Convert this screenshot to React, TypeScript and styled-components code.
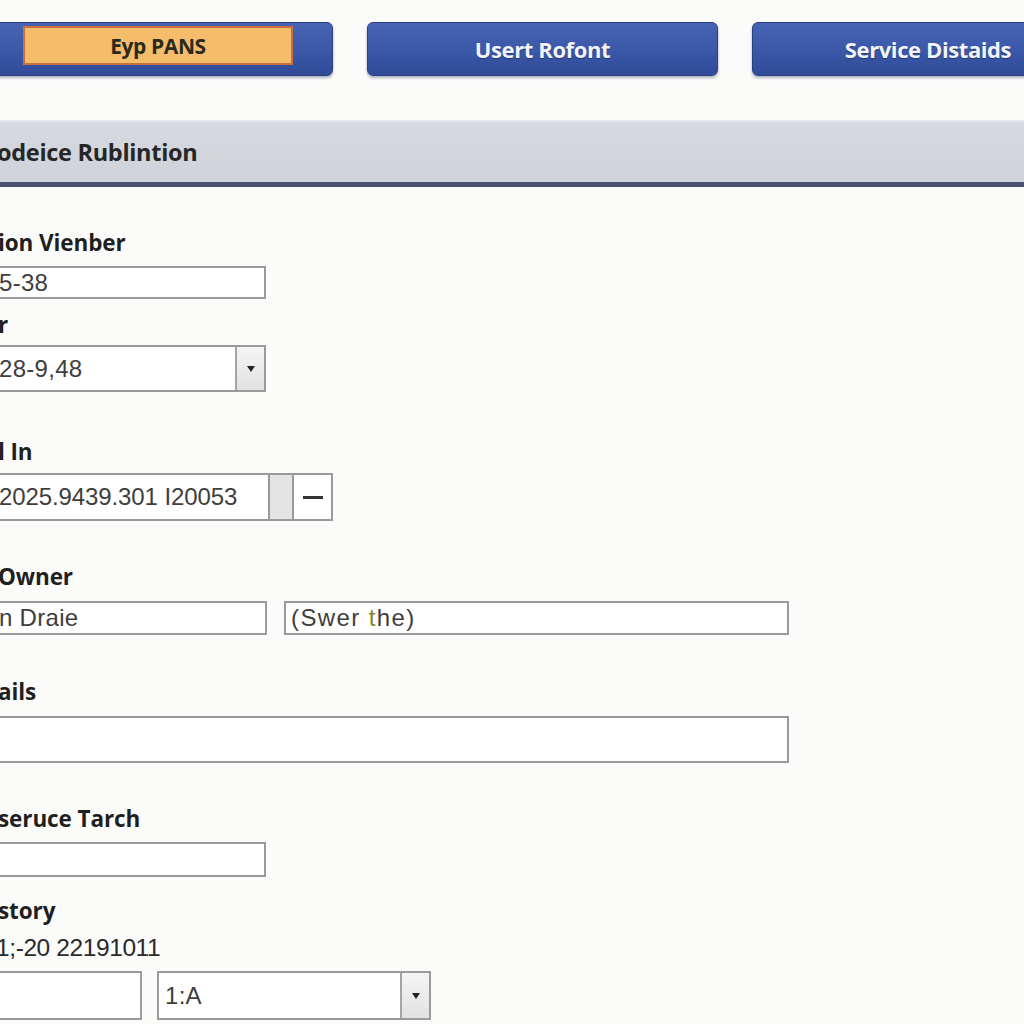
import React, { FC } from 'react'
import styled, { createGlobalStyle } from 'styled-components'

const GlobalStyle = createGlobalStyle`
  html, body {
    margin: 0;
    padding: 0;
    background: #fbfbfa;
    overflow: hidden;
  }
  body {
    width: 1024px;
    height: 1024px;
  }
`

export default function App() {
  return (
    <>
      <GlobalStyle />
      <Page>
        <Toolbar>
          <TabButton $width={353} $offset={-20}>
            <ActiveTab>Eyp PANS</ActiveTab>
          </TabButton>
          <TabButton $width={351}>Usert Rofont</TabButton>
          <TabButton $width={352}>Service Distaids</TabButton>
        </Toolbar>

        <SectionBar>
          <SectionTitle>odeice Rublintion</SectionTitle>
        </SectionBar>

        <Form>
          <Label $mt={44}>ion Vienber</Label>
          <TextBox $mt={11} $width={278} $height={33}>5-38</TextBox>

          <Label $mt={14}>r</Label>
          <SelectBox $mt={8} $width={278} $height={47} value="28-9,48" />

          <Label $mt={48}>l In</Label>
          <DateRow>
            <DateText>2025.9439.301 I20053</DateText>
            <Spinner />
            <DashButton>
              <Dash />
            </DashButton>
          </DateRow>

          <Label $mt={44}>Owner</Label>
          <Row $mt={12} $gap={17}>
            <TextBox $width={279} $height={34}>n Draie</TextBox>
            <TextBox $width={505} $height={34} $pad={5}>
              <Wide>
                (Swer <Odd>t</Odd>he)
              </Wide>
            </TextBox>
          </Row>

          <Label $mt={45}>ails</Label>
          <TextBox $mt={12} $width={801} $height={47} />

          <Label $mt={44}>seruce Tarch</Label>
          <TextBox $mt={11} $width={278} $height={35} />

          <Label $mt={22}>story</Label>
          <Plain>1;-20 22191011</Plain>
          <Row $mt={11} $gap={15}>
            <TextBox $width={154} $height={49} />
            <SelectBox $width={274} $height={49} value="1:A" $pad={6} />
          </Row>
        </Form>
      </Page>
    </>
  )
}

const SelectBox: FC<{
  value: string
  $width: number
  $height: number
  $mt?: number
  $pad?: number
}> = ({ value, $width, $height, $mt, $pad }) => (
  <TextBox $width={$width} $height={$height} $mt={$mt} $pad={$pad}>
    <Grow>{value}</Grow>
    <DropButton>
      <Arrow />
    </DropButton>
  </TextBox>
)

const Page = styled.div`
  width: 1024px;
  height: 1024px;
  display: flex;
  flex-direction: column;
  font-family: 'Open Sans', 'Liberation Sans', sans-serif;
  color: #222;
`

const Toolbar = styled.div`
  display: flex;
  gap: 34px;
  padding-top: 22px;
  height: 54px;
`

const TabButton = styled.div<{ $width: number; $offset?: number }>`
  flex: none;
  width: ${p => p.$width}px;
  margin-left: ${p => p.$offset ?? 0}px;
  height: 54px;
  box-sizing: border-box;
  border-radius: 6px;
  border: 1px solid #2a3f80;
  background: linear-gradient(#4663b4 0%, #3a57a8 55%, #2f4b98 100%);
  box-shadow: 0 2px 3px rgba(30, 40, 80, 0.35);
  display: flex;
  align-items: center;
  justify-content: center;
  color: #f2f4fa;
  font-weight: 700;
  font-size: 22px;
  letter-spacing: -0.4px;
  text-shadow: 0 1px 1px rgba(0, 0, 0, 0.35);
`

const ActiveTab = styled.div`
  align-self: flex-start;
  margin: 3px auto 0 42px;
  width: 270px;
  height: 39px;
  box-sizing: border-box;
  background: #f5bc6c;
  border: 2px solid #c7713f;
  display: flex;
  align-items: center;
  justify-content: center;
  color: #2a2a1c;
  font-size: 21px;
  text-shadow: none;
`

const SectionBar = styled.div`
  margin-top: 44px;
  height: 67px;
  box-sizing: border-box;
  background: linear-gradient(#d6d9de, #cfd2d9);
  border-top: 2px solid #e6e7ea;
  border-bottom: 5px solid #4a5171;
  display: flex;
  align-items: center;
`

const SectionTitle = styled.div`
  margin-left: -3px;
  font-weight: 700;
  font-size: 23.5px;
  letter-spacing: -0.3px;
  color: #262626;
`

const Form = styled.div`
  display: flex;
  flex-direction: column;
  align-items: flex-start;
`

const Label = styled.div<{ $mt: number }>`
  margin-top: ${p => p.$mt}px;
  height: 24px;
  line-height: 24px;
  margin-left: -2px;
  font-weight: 700;
  font-size: 22.5px;
  letter-spacing: -0.1px;
  color: #1f1f1f;
  white-space: nowrap;
`

const TextBox = styled.div<{ $width: number; $height: number; $mt?: number; $pad?: number }>`
  margin-top: ${p => p.$mt ?? 0}px;
  width: ${p => p.$width}px;
  height: ${p => p.$height}px;
  margin-left: ${p => (p.$pad ? 0 : -12)}px;
  padding-left: ${p => p.$pad ?? 9}px;
  box-sizing: border-box;
  border: 2px solid #9a9a9a;
  background: #fff;
  display: flex;
  align-items: center;
  font-family: 'Liberation Sans', Arial, sans-serif;
  font-size: 24px;
  letter-spacing: 0.3px;
  color: #3e3e3e;
  white-space: nowrap;
`

const Wide = styled.span`
  letter-spacing: 1.4px;
`

const Row = styled.div<{ $mt: number; $gap: number }>`
  margin-top: ${p => p.$mt}px;
  display: flex;
  gap: ${p => p.$gap}px;
  & > :not(:first-child) {
    margin-left: 0;
  }
`

const Grow = styled.span`
  flex: 1;
`

const DropButton = styled.div`
  align-self: stretch;
  width: 27px;
  border-left: 2px solid #a5a5a5;
  background: linear-gradient(#f4f4f4, #e2e2e2);
  display: flex;
  align-items: center;
  justify-content: center;
`

const Arrow = styled.div`
  width: 0;
  height: 0;
  border-left: 4px solid transparent;
  border-right: 4px solid transparent;
  border-top: 6px solid #222;
`

const DateRow = styled.div`
  margin-top: 9px;
  margin-left: -12px;
  width: 345px;
  height: 48px;
  box-sizing: border-box;
  border: 2px solid #9a9a9a;
  background: #fff;
  display: flex;
  align-items: stretch;
`

const DateText = styled.div`
  width: 278px;
  padding-left: 9px;
  box-sizing: border-box;
  display: flex;
  align-items: center;
  font-family: 'Liberation Sans', Arial, sans-serif;
  font-size: 24px;
  letter-spacing: -0.1px;
  color: #3e3e3e;
  white-space: nowrap;
  overflow: hidden;
`

const Spinner = styled.div`
  width: 22px;
  background: #e4e4e4;
  border-left: 2px solid #9a9a9a;
  border-right: 2px solid #9a9a9a;
`

const DashButton = styled.div`
  flex: 1;
  display: flex;
  align-items: center;
  justify-content: center;
`

const Dash = styled.div`
  width: 20px;
  height: 3px;
  background: #333;
`

const Odd = styled.span`
  color: #7e8a2a;
`

const Plain = styled.div`
  margin-top: 13px;
  height: 24px;
  line-height: 24px;
  margin-left: -4px;
  font-family: 'Liberation Sans', Arial, sans-serif;
  font-size: 24.5px;
  letter-spacing: -0.4px;
  color: #2a2a2a;
`
